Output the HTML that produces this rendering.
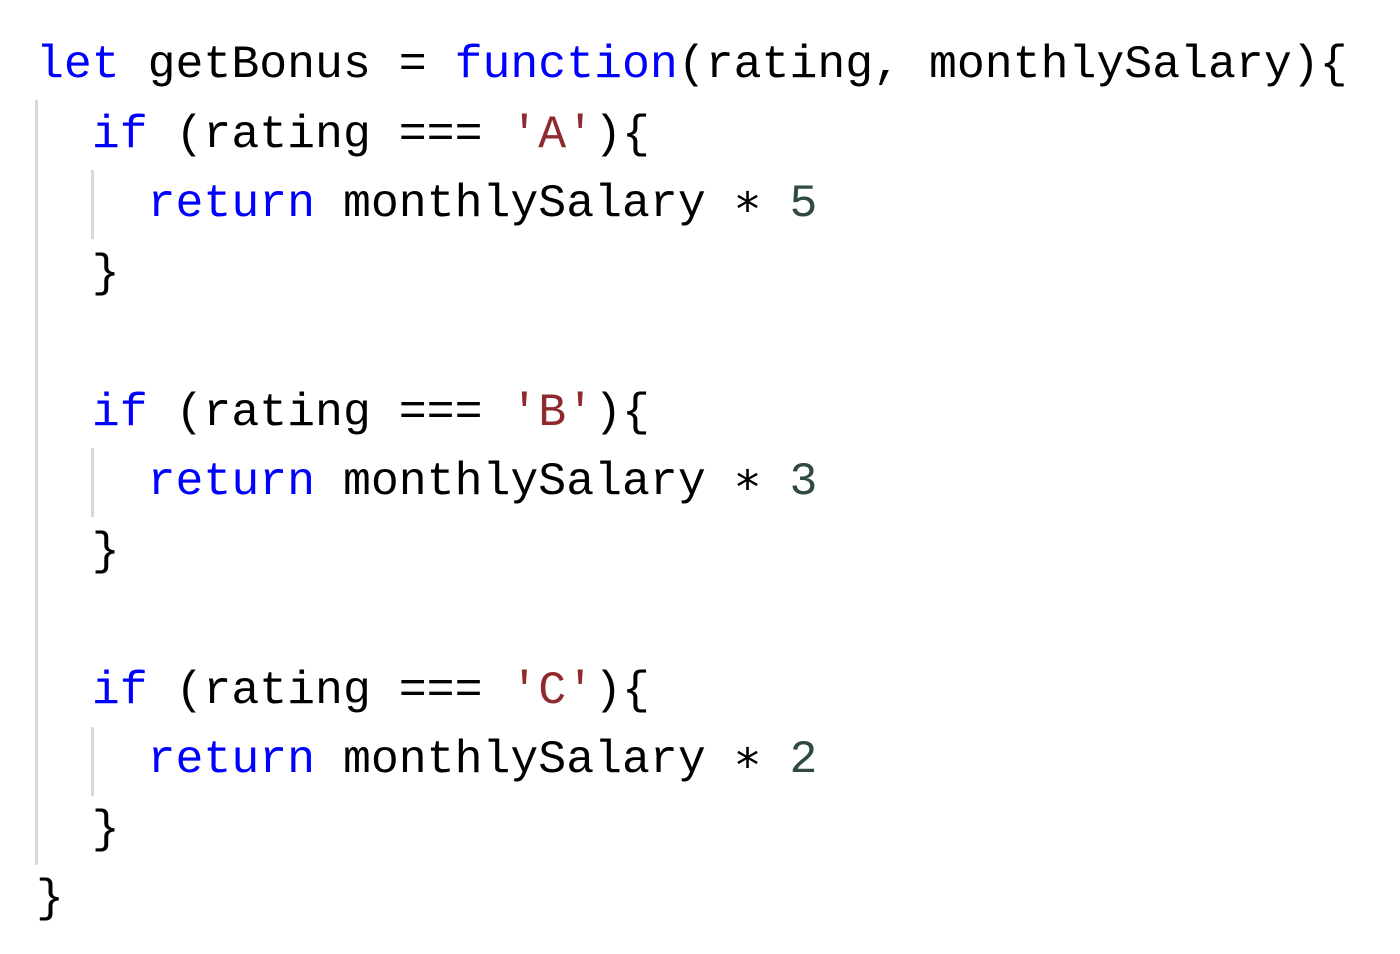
<!DOCTYPE html>
<html><head><meta charset="utf-8"><style>
html,body{margin:0;padding:0;background:#fff;width:1400px;height:954px;overflow:hidden}
pre{margin:0;position:absolute;left:36px;top:30px;font-family:"Liberation Mono","DejaVu Sans Mono",monospace;font-size:46.5px;line-height:69.5px;color:#000}
.k{color:#0000ff}.s{color:#8f2a2e}.n{color:#2f4a44}
.a{display:inline-block;width:0.6em;text-align:center;font-family:"DejaVu Sans Mono",monospace;line-height:0;vertical-align:baseline}
.g{position:absolute;width:3px;background:#d8d8d8}
</style></head><body>
<div class="g" style="left:35px;top:100px;height:765px"></div>
<div class="g" style="left:91px;top:170px;height:69px"></div>
<div class="g" style="left:91px;top:448px;height:69px"></div>
<div class="g" style="left:91px;top:727px;height:69px"></div>
<pre><span class="k">let</span> getBonus = <span class="k">function</span>(rating, monthlySalary){
  <span class="k">if</span> (rating === <span class="s">'A'</span>){
    <span class="k">return</span> monthlySalary <span class="a">∗</span> <span class="n">5</span>
  }

  <span class="k">if</span> (rating === <span class="s">'B'</span>){
    <span class="k">return</span> monthlySalary <span class="a">∗</span> <span class="n">3</span>
  }

  <span class="k">if</span> (rating === <span class="s">'C'</span>){
    <span class="k">return</span> monthlySalary <span class="a">∗</span> <span class="n">2</span>
  }
}</pre>
</body></html>
